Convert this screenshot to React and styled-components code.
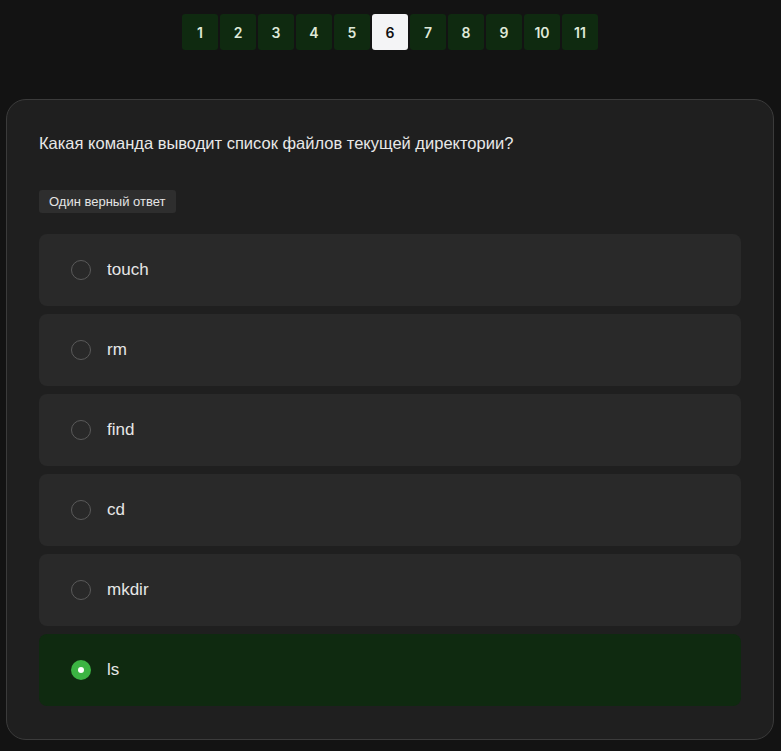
import React, { useState } from "react";
import styled, { createGlobalStyle } from "styled-components";

const Global = createGlobalStyle`
    body {
        margin: 0;
        background: #131313;
        font-family: "Liberation Sans", Arial, sans-serif;
        color: #e6e6e6;
    }
`
const Page = styled.div`
    padding: 14px 7px 12px 6px;
`
const Pager = styled.div`
    display: flex;
    justify-content: center;
    gap: 2px;
`
const PageButton = styled.div`
    width: 36px;
    height: 36px;
    display: flex;
    align-items: center;
    justify-content: center;
    border-radius: 3px;
    font-family: Inter, sans-serif;
    font-size: 14px;
    font-weight: 600;
    background: ${props => props.active ? '#f4f4f6' : '#0f2a10'};
    color: ${props => props.active ? '#111' : '#dfe8d8'};
    cursor: pointer;
`
const Card = styled.div`
    margin-top: 49px;
    border: 1px solid #3b3b3b;
    border-radius: 20px;
    background: #1f1f1f;
    padding: 31px 32px 33px;
`
const Question = styled.div`
    font-size: 16.5px;
    line-height: 24px;
    color: #e8e8e8;
`
const Badge = styled.div`
    display: inline-block;
    margin-top: 35px;
    padding: 4px 10px;
    background: #2e2e2e;
    border-radius: 3px;
    font-size: 13px;
    line-height: 15px;
    color: #e4e4e4;
`
const Options = styled.div`
    margin-top: 21px;
    display: flex;
    flex-direction: column;
    gap: 8px;
`
const Option = styled.div`
    display: flex;
    align-items: center;
    gap: 16px;
    height: 72px;
    padding: 0 32px;
    border-radius: 8px;
    background: ${props => props.selected ? '#0f2a10' : '#292929'};
    font-size: 17px;
    color: #e6e6e6;
    cursor: pointer;
`
const Radio = styled.div`
    width: 20px;
    height: 20px;
    border-radius: 50%;
    box-sizing: border-box;
    display: flex;
    align-items: center;
    justify-content: center;
    border: ${props => props.checked ? 'none' : '1px solid #5a5a5a'};
    background: ${props => props.checked ? '#3cb443' : 'transparent'};
    &::after {
        content: '';
        display: ${props => props.checked ? 'block' : 'none'};
        width: 6px;
        height: 6px;
        border-radius: 50%;
        background: #fff;
    }
`

const answers = ['touch', 'rm', 'find', 'cd', 'mkdir', 'ls']

export default function App() {
    const [page, setPage] = useState(6)
    const [picked, setPicked] = useState('ls')

    return (
        <Page>
            <Global />
            <Pager>
                {Array.from({ length: 11 }, (_, i) => i + 1).map(n => (
                    <PageButton key={n} active={n === page} onClick={() => setPage(n)}>
                        {n}
                    </PageButton>
                ))}
            </Pager>
            <Card>
                <Question>Какая команда выводит список файлов текущей директории?</Question>
                <Badge>Один верный ответ</Badge>
                <Options>
                    {answers.map(a => (
                        <Option key={a} selected={a === picked} onClick={() => setPicked(a)}>
                            <Radio checked={a === picked} />
                            {a}
                        </Option>
                    ))}
                </Options>
            </Card>
        </Page>
    )
}
